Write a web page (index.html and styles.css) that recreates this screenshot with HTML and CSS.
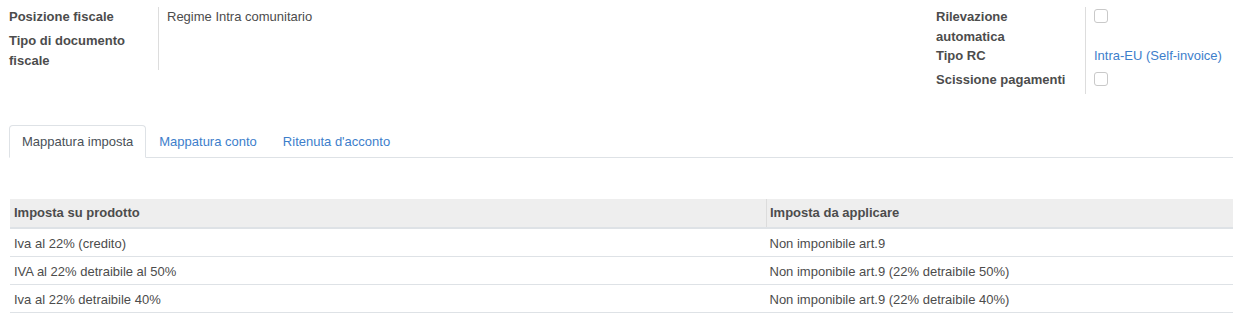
FILE: index.html
```html
<!DOCTYPE html>
<html lang="it">
<head>
  <meta charset="UTF-8">
  <meta name="viewport" content="width=device-width, initial-scale=1">
  <title>Posizione fiscale</title>
  <link rel="stylesheet" href="styles.css">
</head>
<body>

  <div class="sheet">
    <div class="groups">
      <div class="group">
        <div class="row">
          <div class="label">Posizione fiscale</div>
          <div class="value">Regime Intra comunitario</div>
        </div>
        <div class="row">
          <div class="label">Tipo di documento fiscale</div>
          <div class="value"></div>
        </div>
      </div>

      <div class="group group-right">
        <div class="row">
          <div class="label">Rilevazione automatica</div>
          <div class="value"><span class="check"></span></div>
        </div>
        <div class="row">
          <div class="label">Tipo RC</div>
          <div class="value"><a class="link" href="#">Intra-EU (Self-invoice)</a></div>
        </div>
        <div class="row">
          <div class="label">Scissione pagamenti</div>
          <div class="value"><span class="check"></span></div>
        </div>
      </div>
    </div>

    <ul class="tabs">
      <li class="tab active">Mappatura imposta</li>
      <li class="tab">Mappatura conto</li>
      <li class="tab">Ritenuta d'acconto</li>
    </ul>

    <table class="grid">
      <thead>
        <tr>
          <th class="col-first">Imposta su prodotto</th>
          <th>Imposta da applicare</th>
        </tr>
      </thead>
      <tbody>
        <tr>
          <td>Iva al 22% (credito)</td>
          <td>Non imponibile art.9</td>
        </tr>
        <tr>
          <td>IVA al 22% detraibile al 50%</td>
          <td>Non imponibile art.9 (22% detraibile 50%)</td>
        </tr>
        <tr>
          <td>Iva al 22% detraibile 40%</td>
          <td>Non imponibile art.9 (22% detraibile 40%)</td>
        </tr>
      </tbody>
    </table>
  </div>

</body>
</html>
```

FILE: styles.css
```css
body {
  font-family: "Liberation Sans", Arial, sans-serif;
  font-size: 13px;
  line-height: 19.5px;
  color: #4c4c4c;
  margin: 0;
  padding: 0;
  background: #fff;
}
.sheet {
  padding: 7px 0 0 9px;
}
.groups {
  display: flex;
  justify-content: space-between;
  align-items: flex-start;
}
.group {
  display: flex;
  flex-direction: column;
}
.group-right {
  width: 297px;
}
.row {
  display: flex;
  min-height: 24px;
}
.label {
  width: 150px;
  padding-right: 8px;
  box-sizing: border-box;
  border-right: 1px solid #ddd;
  font-weight: bold;
}
.value {
  padding-left: 8px;
}
.link {
  color: #3d7ecb;
  text-decoration: none;
}
.check {
  display: block;
  width: 12px;
  height: 12px;
  margin-top: 2px;
  border: 1px solid #c9c9c9;
  border-radius: 3px;
  background: #fff;
}
.tabs {
  display: flex;
  list-style: none;
  margin: 31px 0 0;
  padding: 0;
  border-bottom: 1px solid #dee2e6;
}
.tab {
  padding: 6px 12px 5px;
  border: 1px solid transparent;
  border-top-left-radius: 4px;
  border-top-right-radius: 4px;
  margin-bottom: -1px;
  color: #3d7ecb;
}
.tab.active {
  color: #495057;
  background: #fff;
  border-color: #dee2e6 #dee2e6 #fff;
}
.grid {
  width: 1223px;
  margin: 41px 0 0 1px;
  border-collapse: collapse;
}
.grid th {
  text-align: left;
  font-weight: bold;
  background: #eeeeee;
  padding: 4px 4px;
  line-height: 20px;
  border-bottom: 2px solid #dee2e6;
}
.grid .col-first {
  width: 748px;
  border-right: 1px solid #dcdcdc;
}
.grid th + th,
.grid td + td {
  padding-left: 3px;
}
.grid td {
  padding: 5px 4px 2px;
  line-height: 20px;
  border-bottom: 1px solid #dee2e6;
}
```
